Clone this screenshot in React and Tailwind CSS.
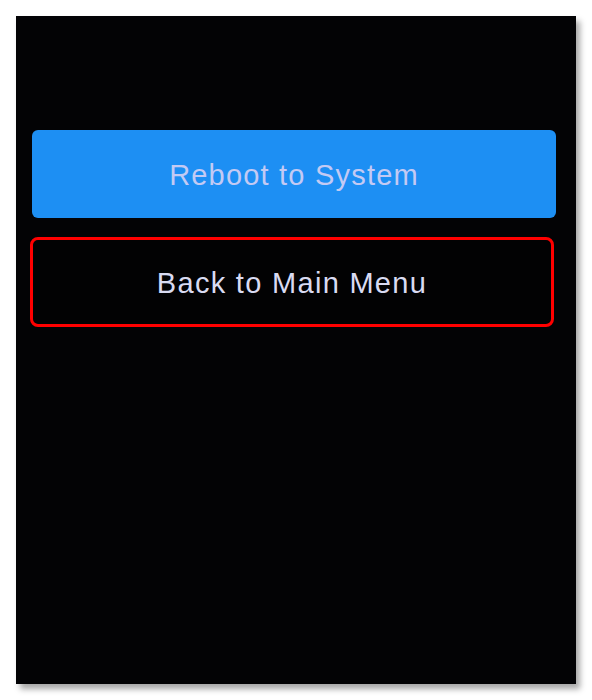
import React from "react";

export default function App() {
  return (
    <div className="w-[592px] h-[700px] bg-white pt-4 pl-4">
      {/* Phone screen */}
      <div
        className="w-[560px] h-[668px] bg-[#030305] shadow-[4px_5px_6px_rgba(0,0,0,0.35)] flex flex-col pt-[114px]"
        style={{ fontFamily: '"Liberation Sans", Arial, sans-serif' }}
      >
        <button className="ml-4 w-[524px] h-[88px] pt-[4px] rounded-md bg-[#1d8ff3] text-[#c3caf3] text-[29px] tracking-[1.2px] flex items-center justify-center">
          Reboot to System
        </button>

        <button className="ml-[14px] mt-[19px] w-[524px] h-[90px] pt-[4px] rounded-lg border-[3px] border-[#ff0000] bg-[#020203] text-[#d9dbf2] text-[29px] tracking-[1.3px] flex items-center justify-center">
          Back to Main Menu
        </button>
      </div>
    </div>
  );
}
